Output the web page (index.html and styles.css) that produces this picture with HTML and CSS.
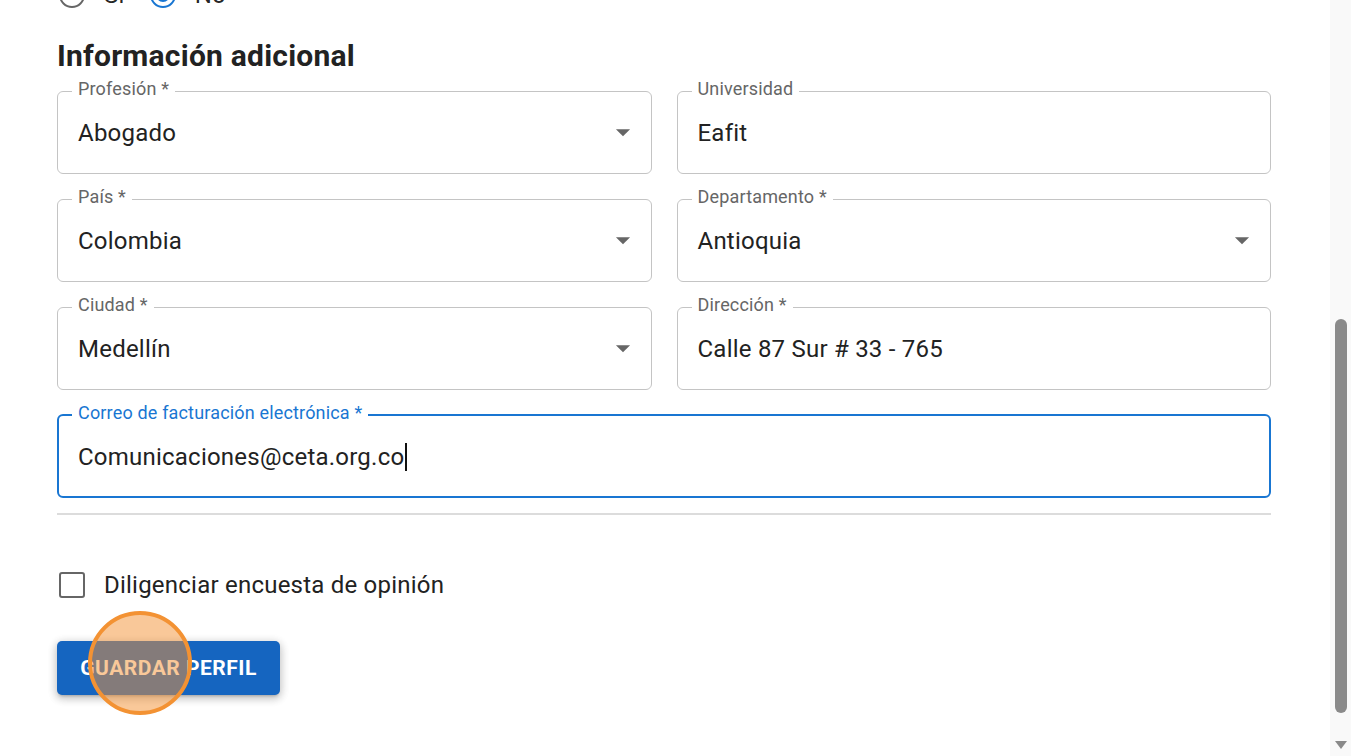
FILE: index.html
```html
<!DOCTYPE html>
<html lang="es">

<head>
    <meta charset="UTF-8">
    <meta name="viewport" content="width=device-width, initial-scale=1.0">
    <title>Perfil</title>
    <link rel="stylesheet" href="styles.css">
</head>

<body>
    <div class="page">
        <main class="content">
            <div class="radios">
                <label class="radio-option">
                    <span class="radio"></span>
                    <span>Sí</span>
                </label>
                <label class="radio-option">
                    <span class="radio checked"></span>
                    <span>No</span>
                </label>
            </div>

            <h2 class="section-title">Información adicional</h2>

            <div class="fields">
                <fieldset class="field">
                    <legend>Profesión *</legend>
                    <div class="value">
                        <span>Abogado</span>
                        <svg class="arrow" viewBox="0 0 24 24"><path d="M7 10l5 5 5-5z" /></svg>
                    </div>
                </fieldset>

                <fieldset class="field">
                    <legend>Universidad</legend>
                    <div class="value"><span>Eafit</span></div>
                </fieldset>

                <fieldset class="field">
                    <legend>País *</legend>
                    <div class="value">
                        <span>Colombia</span>
                        <svg class="arrow" viewBox="0 0 24 24"><path d="M7 10l5 5 5-5z" /></svg>
                    </div>
                </fieldset>

                <fieldset class="field">
                    <legend>Departamento *</legend>
                    <div class="value">
                        <span>Antioquia</span>
                        <svg class="arrow" viewBox="0 0 24 24"><path d="M7 10l5 5 5-5z" /></svg>
                    </div>
                </fieldset>

                <fieldset class="field">
                    <legend>Ciudad *</legend>
                    <div class="value">
                        <span>Medellín</span>
                        <svg class="arrow" viewBox="0 0 24 24"><path d="M7 10l5 5 5-5z" /></svg>
                    </div>
                </fieldset>

                <fieldset class="field">
                    <legend>Dirección *</legend>
                    <div class="value"><span>Calle 87 Sur # 33 - 765</span></div>
                </fieldset>

                <fieldset class="field focused wide">
                    <legend>Correo de facturación electrónica *</legend>
                    <div class="value"><span class="caret">Comunicaciones@ceta.org.co</span></div>
                </fieldset>
            </div>

            <hr class="divider">

            <label class="check-row">
                <span class="checkbox"></span>
                <span>Diligenciar encuesta de opinión</span>
            </label>

            <div class="actions">
                <button type="button" class="save-btn">Guardar perfil</button>
                <span class="click-mark"></span>
            </div>
        </main>

        <div class="scrollbar">
            <div class="thumb"></div>
            <div class="down-arrow"></div>
        </div>
    </div>
</body>

</html>
```

FILE: styles.css
```css
body {
    font-family: Roboto, "Noto Sans", Arial, sans-serif;
    background: #fff;
    color: rgba(0, 0, 0, 0.87);
    margin: 0;
    padding: 0;
}

.page {
    display: flex;
    height: 756px;
    overflow: hidden;
}

.content {
    flex: 1;
    padding: 0 59px 0 57px;
}

/* radio group, scrolled partly out of view */
.radios {
    display: flex;
    align-items: center;
    gap: 25px;
    height: 30px;
    margin-top: -20px;
    padding-left: 2px;
    font-size: 24px;
    letter-spacing: 0.00938em;
}

.radio-option {
    display: flex;
    align-items: center;
    gap: 19px;
}

.radio {
    width: 26px;
    height: 26px;
    box-sizing: border-box;
    border: 2.5px solid #666;
    border-radius: 50%;
    position: relative;
}

.radio.checked {
    border-color: #1976d2;
}

.radio.checked::after {
    content: "";
    position: absolute;
    inset: 4px;
    border-radius: 50%;
    background: #1976d2;
}

.section-title {
    font-size: 30px;
    font-weight: 700;
    line-height: 34px;
    letter-spacing: 0.0075em;
    margin: 29px 0 7px;
    color: #222;
}

.fields {
    display: grid;
    grid-template-columns: 1fr 1fr;
    column-gap: 25px;
    row-gap: 14px;
}

.field {
    margin: 0;
    padding: 0 14px;
    min-width: 0;
    border: 1px solid #c4c4c4;
    border-radius: 6px;
}

.field legend {
    padding: 0 6px 4px;
    font-size: 18px;
    line-height: 18px;
    letter-spacing: 0.00938em;
    color: #666;
}

.field .value {
    display: flex;
    align-items: center;
    justify-content: space-between;
    height: 62px;
    padding: 0 0 9px 6px;
    font-size: 24px;
    letter-spacing: 0.00938em;
    color: #222;
}

.field .arrow {
    width: 34px;
    height: 34px;
    fill: #666;
    margin: -2px -3px 0 0;
}

.field.wide {
    grid-column: span 2;
}

.field.focused {
    border: 2px solid #1976d2;
    padding: 0 13px;
}

.field.focused legend {
    color: #1976d2;
}

.field.focused .value {
    height: 61px;
}

.caret {
    border-right: 2px solid #111;
    padding-right: 1px;
    line-height: 28px;
}

.divider {
    border: none;
    height: 2px;
    background: #dcdcdc;
    margin: 15px 0 0;
}

.check-row {
    display: flex;
    align-items: center;
    gap: 19px;
    height: 30px;
    margin-top: 55px;
    padding-left: 2px;
    font-size: 24px;
    letter-spacing: 0.00938em;
    color: #222;
}

.checkbox {
    width: 26px;
    height: 26px;
    box-sizing: border-box;
    border: 2.5px solid #666;
    border-radius: 3px;
}

.actions {
    position: relative;
    display: inline-block;
    margin-top: 41px;
}

.save-btn {
    display: block;
    width: 223px;
    height: 54px;
    border: none;
    border-radius: 5px;
    background: #1565c0;
    color: #fff;
    font-family: inherit;
    font-size: 21px;
    font-weight: 700;
    letter-spacing: 0.5px;
    text-transform: uppercase;
    box-shadow: 0 3px 3px -2px rgba(0, 0, 0, 0.2), 0 3px 8px 1px rgba(0, 0, 0, 0.14), 0 2px 10px 1px rgba(0, 0, 0, 0.12);
}

/* click highlight over the button */
.click-mark {
    position: absolute;
    left: 31px;
    top: -30px;
    width: 104px;
    height: 104px;
    box-sizing: border-box;
    border: 4px solid #f39233;
    border-radius: 50%;
    background: rgba(243, 146, 51, 0.5);
}

.scrollbar {
    width: 21px;
    background: #f9f9f9;
    display: flex;
    flex-direction: column;
    align-items: center;
}

.thumb {
    width: 12px;
    height: 394px;
    margin-top: 319px;
    border-radius: 6px;
    background: #8a8a8a;
}

.down-arrow {
    margin-top: auto;
    margin-bottom: 7px;
    width: 0;
    height: 0;
    border-left: 6px solid transparent;
    border-right: 6px solid transparent;
    border-top: 8px solid #8a8a8a;
}
```
